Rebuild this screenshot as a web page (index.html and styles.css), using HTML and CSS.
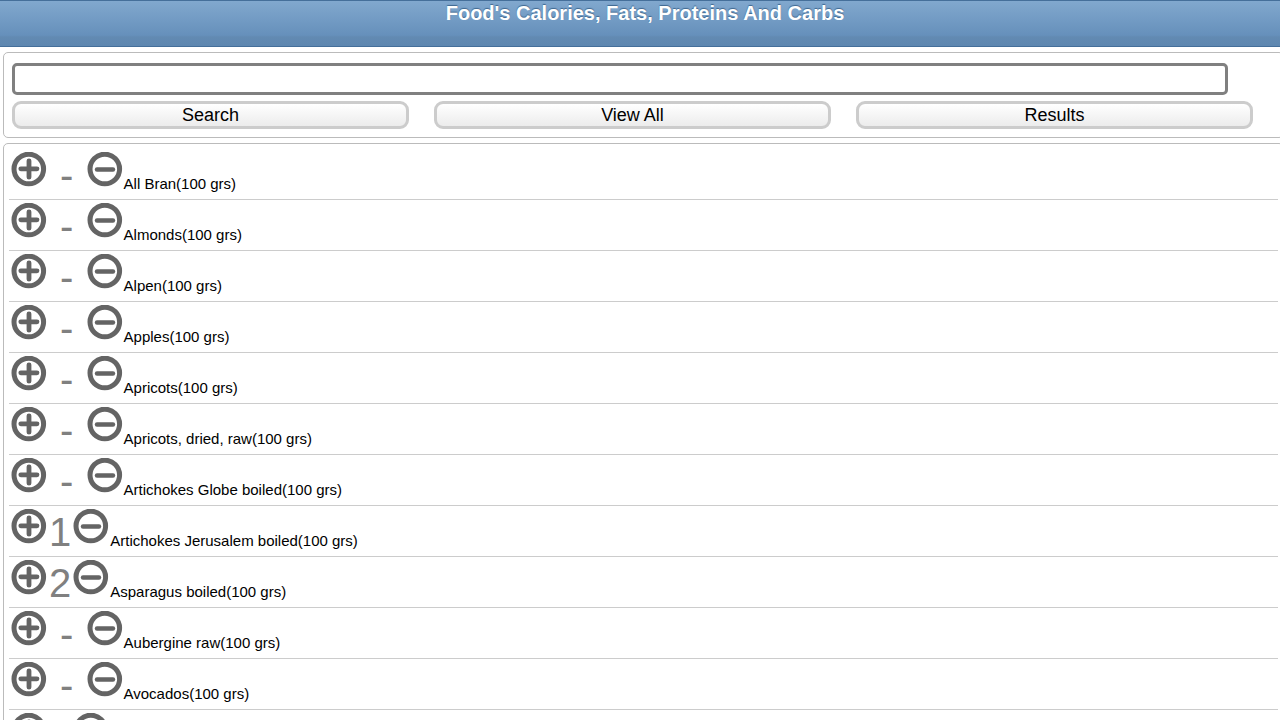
FILE: index.html
```html
<!DOCTYPE html>
<html lang="en">
<head>
    <meta charset="UTF-8">
    <meta name="viewport" content="width=device-width, initial-scale=1.0">
    <title>Food's Calories, Fats, Proteins And Carbs</title>
    <link rel="stylesheet" href="styles.css">
</head>
<body>
    <header class="toolbar">
        <h1>Food's Calories, Fats, Proteins And Carbs</h1>
    </header>

    <form class="panel search" onsubmit="return false">
        <input type="text" class="searchInput" id="searchInput" aria-label="Search food">
        <div class="searchButtons">
            <button type="submit">Search</button>
            <button type="button">View All</button>
            <button type="button">Results</button>
        </div>
    </form>

    <ul class="panel foods" id="foodList"></ul>

    <script src="foods.js"></script>
</body>
</html>
```
FILE: styles.css
```css
body {
    margin: 0;
    background-color: #fff;
    font-family: Arial, "Liberation Sans", sans-serif;
    font-size: 15px;
    color: #000;
    overflow-x: hidden;
}
.toolbar {
    box-sizing: border-box;
    height: 47px;
    padding-left: 10px;
    border-top: 1px solid #456f9a;
    border-bottom: 1px solid #456f9a;
    background: linear-gradient(#81a8ce, #6690bb 76%, #628ab2 80%, #5e87b0);
}
.toolbar h1 {
    margin: 0;
    font-size: 20px;
    line-height: 24px;
    text-align: center;
    color: #fff;
    text-shadow: 0 -1px 1px #3e6790;
}
/* panels run past the right edge of the screen */
.panel {
    margin: 5px -4px 5px 3px;
    border: 1px solid #bbb;
    border-radius: 5px;
}
.search {
    padding: 10px 30px 8px 8px;
}
.searchInput {
    display: block;
    box-sizing: border-box;
    width: 98%;
    height: 32px;
    padding: 0 5px;
    border: 3px solid #808080;
    border-radius: 5px;
    font-family: inherit;
    font-size: 18px;
}
.searchButtons {
    display: flex;
    gap: 25px;
    margin-top: 6px;
}
.searchButtons button {
    flex: 1;
    height: 28px;
    padding: 0;
    border: 3px solid #ccc;
    border-radius: 9px;
    background: linear-gradient(#fff, #ececec);
    font-family: inherit;
    font-size: 18px;
    line-height: 22px;
    color: #000;
}
.foods {
    padding: 5px;
    list-style: none;
}
.food {
    display: flex;
    align-items: baseline;
    padding: 3px 0 1px 2px;
    border-bottom: 1px solid #ccc;
}
.food button {
    align-self: flex-start;
    width: 36px;
    height: 36px;
    padding: 0;
    border: 0;
    background: none;
}
.food svg {
    display: block;
}
.count {
    margin: 0 2px;
    font-size: 40px;
    line-height: 46px;
    color: #808080;
    white-space: pre;
}
.name {
    margin-left: 1px;
    line-height: 18px;
}
```
FILE: foods.js
```js
var foods = [
    { name: 'All Bran', count: 0 },
    { name: 'Almonds', count: 0 },
    { name: 'Alpen', count: 0 },
    { name: 'Apples', count: 0 },
    { name: 'Apricots', count: 0 },
    { name: 'Apricots, dried, raw', count: 0 },
    { name: 'Artichokes Globe boiled', count: 0 },
    { name: 'Artichokes Jerusalem boiled', count: 1 },
    { name: 'Asparagus boiled', count: 2 },
    { name: 'Aubergine raw', count: 0 },
    { name: 'Avocados', count: 0 },
    { name: 'Bacon', count: 1 }
];

var circle = '<circle cx="17.8" cy="17" r="14.8" fill="none" stroke="#646464" stroke-width="5"/>';
var plus = '<path d="M9.8 16.8H26M18 8.8V25.2" stroke="#646464" stroke-width="4.8" stroke-linecap="round"/>';
var minus = '<path d="M10 17.5H26" stroke="#646464" stroke-width="4.4" stroke-linecap="round"/>';

// Builds a round icon button
function iconButton(label, sign) {
    return '<button type="button" aria-label="' + label + '"><svg width="36" height="36" viewBox="0 0 36 36">' +
        circle + sign + '</svg></button>';
}

// Fills the list, foods without portions show a dash
function showFoods() {
    var html = '';
    foods.forEach(function (food) {
        html += '<li class="food">' + iconButton('Add ' + food.name, plus) +
            '<span class="count">' + (food.count || ' - ') + '</span>' +
            iconButton('Remove ' + food.name, minus) +
            '<span class="name">' + food.name + '(100 grs)</span></li>';
    });
    document.getElementById('foodList').innerHTML = html;
}

showFoods();
```
